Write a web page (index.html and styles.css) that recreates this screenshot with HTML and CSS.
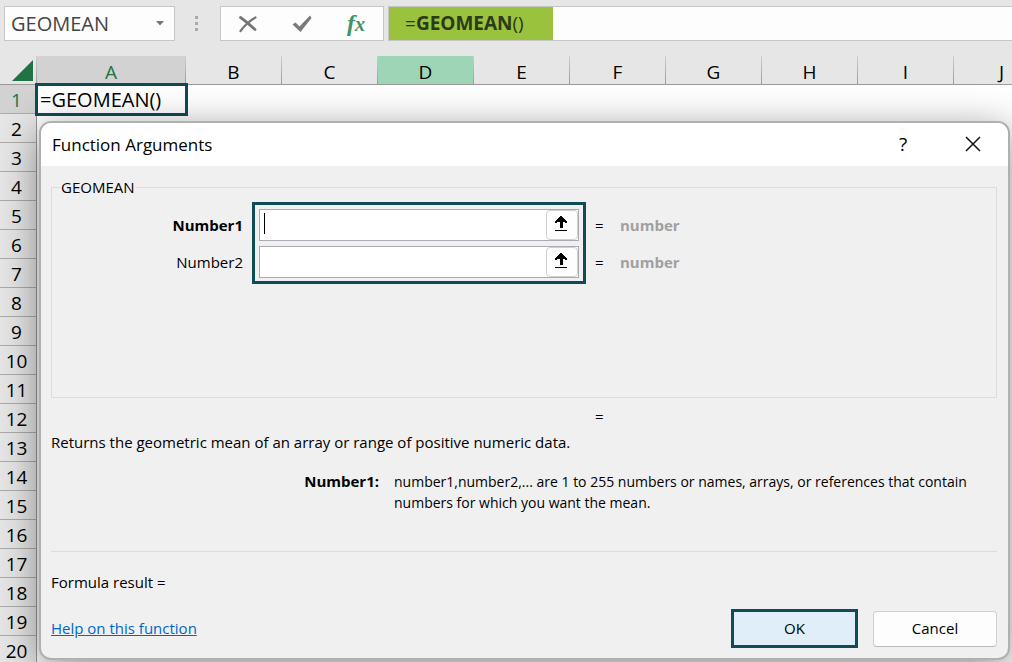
FILE: index.html
```
<!DOCTYPE html>
<html lang="en">
<head>
  <meta charset="UTF-8" />
  <title>GEOMEAN - Function Arguments</title>
  <link rel="stylesheet" href="styles.css">
</head>
<body>

  <!-- Formula bar -->
  <header class="formula-bar">
    <div class="name-box">
      <input type="text" class="name-input" value="GEOMEAN" aria-label="Name box" />
      <button type="button" class="name-arrow" aria-label="Open name list">
        <svg width="8" height="5" viewBox="0 0 8 5"><path d="M0 0h8L4 4.5z" fill="#777"/></svg>
      </button>
    </div>
    <div class="dots"><span></span><span></span><span></span></div>
    <div class="formula-tools">
      <button type="button" aria-label="Cancel entry">
        <svg width="20" height="18" viewBox="0 0 20 18" fill="none" stroke="#757575" stroke-linecap="round">
          <path d="M2.500 2.500C7 5.500 12 10 17 14.500" stroke-width="2.800"/>
          <path d="M17.500 2.500C12 5.500 7 10 2.500 16" stroke-width="2.200"/>
        </svg>
      </button>
      <button type="button" aria-label="Enter">
        <svg width="20" height="18" viewBox="0 0 20 18"><path d="M.5 9.500L3.500 7.500 7.500 11.500 18 .5l1.500 2.500L8.500 17z" fill="#7a7a7a"/></svg>
      </button>
      <button type="button" class="fx" aria-label="Insert function">f<span>x</span></button>
    </div>
    <div class="formula"><span class="formula-text">=<b>GEOMEAN</b>()</span></div>
  </header>

  <!-- Sheet -->
  <main class="sheet">
    <table class="grid">
      <thead>
        <tr>
          <th class="corner"><svg width="21" height="21" viewBox="0 0 21 21"><path d="M21 0v21H0z" fill="#217346"/></svg></th>
          <th class="col-a">A</th><th>B</th><th>C</th><th class="col-hover">D</th><th>E</th>
          <th>F</th><th>G</th><th>H</th><th>I</th><th>J</th>
        </tr>
      </thead>
      <tbody>
        <tr><th class="current">1</th><td class="active-cell">=GEOMEAN()</td><td colspan="9"></td></tr>
        <tr><th>2</th><td colspan="10"></td></tr>
        <tr><th>3</th><td colspan="10"></td></tr>
        <tr><th>4</th><td colspan="10"></td></tr>
        <tr><th>5</th><td colspan="10"></td></tr>
        <tr><th>6</th><td colspan="10"></td></tr>
        <tr><th>7</th><td colspan="10"></td></tr>
        <tr><th>8</th><td colspan="10"></td></tr>
        <tr><th>9</th><td colspan="10"></td></tr>
        <tr><th>10</th><td colspan="10"></td></tr>
        <tr><th>11</th><td colspan="10"></td></tr>
        <tr><th>12</th><td colspan="10"></td></tr>
        <tr><th>13</th><td colspan="10"></td></tr>
        <tr><th>14</th><td colspan="10"></td></tr>
        <tr><th>15</th><td colspan="10"></td></tr>
        <tr><th>16</th><td colspan="10"></td></tr>
        <tr><th>17</th><td colspan="10"></td></tr>
        <tr><th>18</th><td colspan="10"></td></tr>
        <tr><th>19</th><td colspan="10"></td></tr>
        <tr><th>20</th><td colspan="10"></td></tr>
      </tbody>
    </table>

    <!-- Dialog -->
    <section class="dialog" role="dialog" aria-labelledby="dialogTitle">
      <div class="title-bar">
        <h1 id="dialogTitle">Function Arguments</h1>
        <button type="button" class="help-btn" aria-label="Help">?</button>
        <button type="button" class="close-btn" aria-label="Close">
          <svg width="16" height="16" viewBox="0 0 16 16"><path d="M1 1l14 14M15 1L1 15" stroke="#111" stroke-width="1.500" fill="none"/></svg>
        </button>
      </div>

      <form class="dialog-body">
        <fieldset>
          <legend>GEOMEAN</legend>
          <div class="args">
            <div class="arg-labels">
              <label for="number1"><b>Number1</b></label>
              <label for="number2">Number2</label>
            </div>
            <div class="arg-inputs">
              <div class="ref-box">
                <span class="caret"></span>
                <input type="text" id="number1" />
                <button type="button" aria-label="Select range for Number1">
                  <svg width="12" height="15" viewBox="0 0 12 15" shape-rendering="crispEdges"><path d="M5 0h2v1h1v1h1v1h1v1h1v1h1v2h-2V6H8v6H5V6H2v1H0V5h1V4h1V3h1V2h1V1h1zM0 14h12v1H0z"/></svg>
                </button>
              </div>
              <div class="ref-box">
                <input type="text" id="number2" />
                <button type="button" aria-label="Select range for Number2">
                  <svg width="12" height="15" viewBox="0 0 12 15" shape-rendering="crispEdges"><path d="M5 0h2v1h1v1h1v1h1v1h1v1h1v2h-2V6H8v6H5V6H2v1H0V5h1V4h1V3h1V2h1V1h1zM0 14h12v1H0z"/></svg>
                </button>
              </div>
            </div>
            <div class="arg-results">
              <p><span>=</span><b>number</b></p>
              <p><span>=</span><b>number</b></p>
            </div>
          </div>
        </fieldset>

        <p class="total">=</p>
        <p class="description">Returns the geometric mean of an array or range of positive numeric data.</p>
        <dl class="arg-help">
          <dt>Number1:</dt>
          <dd>number1,number2,... are 1 to 255 numbers or names, arrays, or references that contain numbers for which you want the mean.</dd>
        </dl>
        <p class="result">Formula result =</p>

        <div class="actions">
          <a href="#">Help on this function</a>
          <button type="submit" class="ok">OK</button>
          <button type="button" class="cancel">Cancel</button>
        </div>
      </form>
    </section>
  </main>

</body>
</html>
```
FILE: styles.css
```
* {
  box-sizing: border-box;
}

body {
  margin: 0;
  height: 100vh;
  overflow: hidden;
  display: flex;
  flex-direction: column;
  background: #e6e6e6;
  color: #000;
  font-family: "Open Sans", "Noto Sans", sans-serif;
  font-size: 15px;
  line-height: 21px;
}

h1, p, dl, dd {
  margin: 0;
}

button, input {
  margin: 0;
  padding: 0;
  border: 0;
  background: none;
  color: inherit;
  font: inherit;
}

/* Formula bar */
.formula-bar {
  flex: none;
  display: flex;
  padding: 6px 0 15px 4px;
}

.name-box,
.formula-tools,
.formula {
  height: 35px;
  border: 1px solid #c6c6c6;
  background: #fdfdfd;
}

.name-box {
  width: 171px;
  display: flex;
  align-items: center;
  padding: 0 8px 0 6px;
}

.name-input {
  flex: 1;
  min-width: 0;
  outline: none;
  color: #444;
  font-size: 20px;
}

.name-arrow {
  display: flex;
  padding: 2px;
}

.dots {
  width: 45px;
  display: flex;
  flex-direction: column;
  align-items: center;
  justify-content: center;
  gap: 3px;
  padding-right: 2px;
}

.dots span {
  width: 3px;
  height: 3px;
  background: #aaa;
}

.formula-tools {
  width: 164px;
  display: flex;
  align-items: center;
  justify-content: space-around;
}

.formula-tools button {
  width: 54px;
  display: flex;
  justify-content: center;
}

.formula-tools .fx {
  align-items: baseline;
  color: #3f9467;
  font: italic bold 24px/30px "Liberation Serif", serif;
}

.fx span {
  font-size: 20px;
}

.formula {
  flex: 1;
  margin-left: 4px;
  border-right: 0;
}

.formula-text {
  display: inline-block;
  width: 164px;
  padding-left: 16px;
  background: #9ac23c;
  color: #2b3a17;
  font-size: 19px;
  line-height: 33px;
}

/* Sheet */
.sheet {
  flex: 1;
  position: relative;
  overflow: hidden;
}

.grid {
  width: 1050px;
  table-layout: fixed;
  border-collapse: separate;
  border-spacing: 0;
  background: #fff;
  font-size: 19px;
}

.grid th {
  height: 29px;
  padding: 2px 0 0;
  font-weight: 400;
  line-height: 26px;
  background: #e6e6e6;
}

.grid thead th {
  padding-top: 4px;
  line-height: 24px;
  width: 96px;
  border-right: 1px solid;
  border-bottom: 1px solid #999;
  border-image: linear-gradient(#d0d0d0, #999) 1;
  border-top: 0;
  border-left: 0;
}

.grid thead .corner {
  width: 37px;
  padding: 0 3px 3px 0;
  text-align: right;
  vertical-align: bottom;
  line-height: 0;
}

.grid thead .col-a {
  width: 149px;
  background: #d2d2d2;
  color: #217346;
}

.grid thead .col-hover {
  background: #9fd5b7;
}

.grid tbody th {
  padding-right: 3px;
  border-right: 1px solid #999;
  border-bottom: 1px solid #ababab;
}

.grid tbody .current {
  background: #d2d2d2;
  color: #217346;
}

.grid td {
  padding: 0;
}

.grid .active-cell {
  padding-left: 3px;
  font-size: 20px;
  line-height: 28px;
  background: #fff;
  outline: 3px solid #0f4c55;
  outline-offset: -1px;
}

/* Dialog */
.dialog {
  position: absolute;
  top: 65px;
  left: 39px;
  right: 2px;
  border: 2px solid #b0b0b0;
  border-radius: 12px;
  overflow: hidden;
  background: #f0f0f0;
  box-shadow: 0 9px 40px rgba(0, 0, 0, 0.45);
}

.title-bar {
  height: 43px;
  display: flex;
  align-items: center;
  padding: 0 20px 1px 11px;
  background: #fff;
}

.title-bar h1 {
  flex: 1;
  font-size: 17px;
  font-weight: 400;
}

.title-bar button {
  width: 30px;
  height: 30px;
  display: flex;
  align-items: center;
  justify-content: center;
}

.title-bar .help-btn {
  margin-right: 40px;
  font-size: 19px;
}

.dialog-body {
  padding: 11px 11px 10px 10px;
}

fieldset {
  min-width: 0;
  min-height: 221px;
  margin: 0;
  padding: 4px 0 0;
  border: 1px solid #dcdcdc;
}

legend {
  margin-left: 8px;
  padding: 0 1px;
}

.args {
  display: flex;
  gap: 9px;
}

.arg-labels {
  width: 191px;
  display: flex;
  flex-direction: column;
  gap: 5px;
  padding-top: 7px;
  text-align: right;
}

.arg-labels label,
.arg-results p {
  line-height: 32px;
}

.arg-inputs {
  width: 334px;
  display: flex;
  flex-direction: column;
  gap: 5px;
  padding: 4px 4px 3px;
  border: 3px solid #0f4c55;
}

.ref-box {
  position: relative;
  height: 32px;
  display: flex;
  border: 1px solid #abaab0;
  background: #fff;
}

.ref-box input {
  flex: 1;
  min-width: 0;
  padding: 0 5px;
  outline: none;
}

.ref-box button {
  width: 32px;
  display: flex;
  align-items: center;
  justify-content: center;
  padding: 0 2px 3px 0;
  border: 1px solid #d0d0d0;
  border-radius: 4px;
  background: #fdfdfd;
}

.caret {
  position: absolute;
  top: 3px;
  left: 4px;
  width: 1px;
  height: 21px;
  background: #000;
}

.arg-results {
  display: flex;
  flex-direction: column;
  gap: 5px;
  padding-top: 7px;
}

.arg-results p {
  display: flex;
}

.arg-results span {
  width: 25px;
}

.arg-results b {
  color: #a0a0a0;
}

.total {
  padding: 8px 0 5px 544px;
}

.arg-help {
  display: flex;
  gap: 15px;
  padding: 18px 0 38px;
  border-bottom: 1px solid #dcdcdc;
}

.arg-help dt {
  width: 328px;
  flex: none;
  text-align: right;
  font-weight: 700;
}

.arg-help dd {
  font-size: 14px;
}

.result {
  padding: 20px 0 16px;
}

.actions {
  display: flex;
  align-items: center;
}

.actions a {
  margin-right: auto;
  color: #0066cc;
}

.actions button {
  height: 36px;
  width: 124px;
  border: 1px solid #d0d0d0;
  border-bottom-color: #bbb;
  border-radius: 4px;
  background: #fdfdfd;
}

.actions .ok {
  width: 127px;
  height: 39px;
  margin-right: 15px;
  border: 3px solid #0f4c55;
  border-radius: 0;
  background: #e0eef9;
}
```
